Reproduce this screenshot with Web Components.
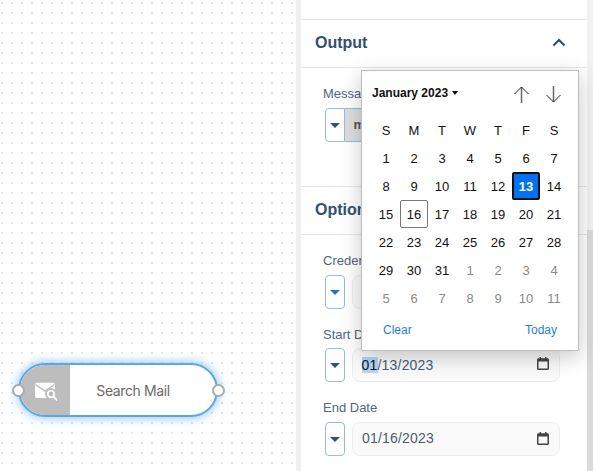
<!DOCTYPE html>
<html>
<head>
<meta charset="utf-8">
<style>
    html, body { margin: 0; height: 100%; overflow: hidden; }
    body { display: flex; width: 593px; height: 471px; font-family: "Liberation Sans", Arial, sans-serif; background: #fff; }
</style>
</head>
<body>
<flow-canvas>
    <flow-node label="Search Mail"></flow-node>
</flow-canvas>
<side-panel>
    <panel-section></panel-section>
    <panel-section title="Output" collapsible style="--body-h: 118px">
        <form-field label="Message" toggle="open"><tag-chip>message</tag-chip></form-field>
    </panel-section>
    <panel-section title="Options">
        <form-field label="Credentials" toggle="blue"><blank-input></blank-input></form-field>
        <form-field label="Start Date"><date-input value="01/13/2023" selected></date-input></form-field>
        <form-field label="End Date"><date-input value="01/16/2023"></date-input></form-field>
    </panel-section>
    <date-picker></date-picker>
</side-panel>

<script>
class FlowCanvas extends HTMLElement {
    constructor(){
        super();
        this.attachShadow({mode:"open"}).innerHTML = `
        <style>
            :host {
                display: block; position: relative; flex: none; width: 296px; height: 100%;
                background-color: #fff;
                background-image: conic-gradient(at 2px 2px, transparent 270deg, #e6e6e6 0);
                background-size: 10px 10px;
                background-position: 1px 2px;
            }
        </style>
        <slot></slot>`;
    }
}
customElements.define("flow-canvas", FlowCanvas);

class FlowNode extends HTMLElement {
    constructor(){
        super();
        this.attachShadow({mode:"open"}).innerHTML = `
        <style>
            :host {
                position: absolute; left: 18px; top: 363px; width: 200px; height: 54px;
                box-sizing: border-box; display: flex;
                background: #fff; border: 2px solid #5aa7e8; border-radius: 27px;
                box-shadow: 0 0 8px 2px rgba(90,167,232,.55);
                font: 14px Inter, "Liberation Sans", sans-serif; color: #6a6a6a;
            }
            #icon { flex: none; width: 50px; display: flex; align-items: center; justify-content: center;
                background: #bdbdbd; border-radius: 25px 0 0 25px; }
            #label { flex: 1; display: flex; align-items: center; justify-content: center; letter-spacing: -.4px; padding-right: 20px; }
            .port { position: absolute; top: 19px; width: 13px; height: 13px; box-sizing: border-box; border-radius: 50%;
                background: #fff; border: 2px solid #ababab; }
            .l { left: -8.500px; } .r { right: -9px; }
        </style>
        <div id="icon">
            <svg width="24" height="24" viewBox="0 0 24 24">
                <rect x="2" y="4.700" width="20" height="15.300" rx="2" fill="#fff"/>
                <path d="M2.500 6.500L12 13l9.500-6.500" fill="none" stroke="#bdbdbd" stroke-width="1.500"/>
                <circle cx="18" cy="16" r="6" fill="#bdbdbd"/>
                <circle cx="18" cy="16" r="3.200" fill="none" stroke="#fff" stroke-width="1.600"/>
                <path d="M20.500 18.500L24 22" stroke="#fff" stroke-width="1.800" stroke-linecap="round"/>
            </svg>
        </div>
        <div id="label"></div>
        <div class="port l"></div><div class="port r"></div>`;
    }
    connectedCallback(){
        this.shadowRoot.querySelector("#label").textContent = this.getAttribute("label");
    }
}
customElements.define("flow-node", FlowNode);

class SidePanel extends HTMLElement {
    constructor(){
        super();
        this.attachShadow({mode:"open"}).innerHTML = `
        <style>
            :host {
                display: flex; flex-direction: column; position: relative; flex: 1; height: 100%;
                box-sizing: border-box; border-left: 5px solid #efefef; overflow: hidden;
            }
            #track { position: absolute; right: 0; top: 0; bottom: 0; width: 6px; background: #f1f1f1; }
            #thumb { position: absolute; right: 0; top: 230px; bottom: 0; width: 6px; background: #dcd9d9; }
        </style>
        <slot></slot>
        <div id="track"></div><div id="thumb"></div>`;
    }
}
customElements.define("side-panel", SidePanel);

class PanelSection extends HTMLElement {
    constructor(){
        super();
        this.attachShadow({mode:"open"}).innerHTML = `
        <style>
            :host { display: block; flex: none; width: 286px; box-sizing: border-box; border-bottom: 1px solid #e6e6e6; }
            :host(:not([title])) { height: 20px; }
            :host(:not([title])) header, :host(:not([title])) #body { display: none; }
            header {
                display: flex; align-items: center; justify-content: space-between; box-sizing: border-box;
                height: 48px; padding: 0 21px 2px 14px; border-bottom: 1px solid #e6e6e6;
                font-weight: bold; font-size: 16px; color: #34506f;
            }
            svg { display: none; }
            :host([collapsible]) svg { display: block; }
            #body { height: var(--body-h, auto); box-sizing: border-box; padding: 16px 27px 0 22px; }
        </style>
        <header><span id="title"></span>
            <svg width="14" height="9" viewBox="0 0 14 9"><path d="M1.500 7.500L7 2l5.500 5.500" fill="none" stroke="#34506f" stroke-width="2.200"/></svg>
        </header>
        <div id="body"><slot></slot></div>`;
    }
    connectedCallback(){
        this.shadowRoot.querySelector("#title").textContent = this.getAttribute("title");
    }
}
customElements.define("panel-section", PanelSection);

class FormField extends HTMLElement {
    constructor(){
        super();
        this.attachShadow({mode:"open"}).innerHTML = `
        <style>
            :host { display: block; height: 73.500px; font-size: 13px; color: #56637a; }
            #label { height: 20px; line-height: 20px; margin-bottom: 3.500px; }
            #row { display: flex; height: 34px; }
            #toggle {
                flex: none; width: 20px; height: 34px; margin-left: 1.500px; margin-right: 7.500px; box-sizing: border-box;
                border: 1px solid #8fbce8; border-radius: 4px; background: #fff;
                display: flex; align-items: center; justify-content: center;
            }
            #arrow { width: 0; height: 0; margin-top: 1px; border: 5px solid transparent; border-top: 5px solid #34506f; border-bottom: 0; }
            :host([toggle="blue"]) #arrow { border-top-color: #2474c8; }
            :host([toggle="open"]) #toggle { margin-right: 0; border-radius: 4px 0 0 4px; }
            ::slotted(*) { flex: 1; }
        </style>
        <div id="label"></div>
        <div id="row"><div id="toggle"><div id="arrow"></div></div><slot></slot></div>`;
    }
    connectedCallback(){
        this.shadowRoot.querySelector("#label").textContent = this.getAttribute("label");
    }
}
customElements.define("form-field", FormField);

class TagChip extends HTMLElement {
    constructor(){
        super();
        this.attachShadow({mode:"open"}).innerHTML = `
        <style>
            :host { display: flex; align-items: center; padding-left: 9px; box-sizing: border-box; background: #dedede;
                border: 1px solid #8fbce8; border-left: 0; border-radius: 0 4px 4px 0; font-size: 13px; font-weight: bold; color: #555; }
        </style>
        <slot></slot>`;
    }
}
customElements.define("tag-chip", TagChip);

class BlankInput extends HTMLElement {
    constructor(){
        super();
        this.attachShadow({mode:"open"}).innerHTML = `
        <style>
            :host { display: block; box-sizing: border-box; background: #fafafa; border: 1px solid #ececec; border-radius: 8px; }
        </style>`;
    }
}
customElements.define("blank-input", BlankInput);

class DateInput extends HTMLElement {
    constructor(){
        super();
        this.attachShadow({mode:"open"}).innerHTML = `
        <style>
            :host { display: flex; align-items: center; justify-content: space-between; box-sizing: border-box; padding: 0 10px 0 9px;
                background: #fafafa; border: 1px solid #ececec; border-radius: 8px; font-size: 14px; letter-spacing: .2px; color: #4c5a73; }
            #value { margin-top: -1px; }
            mark { display: inline-block; background: #b3d4fb; color: #111; padding: 0 1px 0 0; margin-right: -1px; margin-left: -.5px; }
            svg { display: block; }
            :host([selected]) svg { margin-top: -3px; }
        </style>
        <span id="value"></span>
        <svg width="12" height="13" viewBox="0 0 12 13">
            <path d="M2.500 0H4v1.300h4V0h1.500v1.300H10.500c.8 0 1.500.7 1.500 1.500V11.500c0 .8-.7 1.500-1.500 1.500h-9C.7 13 0 12.300 0 11.500V2.800C0 2 .7 1.300 1.500 1.300h1zM1.500 4.500v7h9v-7z" fill="#444"/>
        </svg>`;
    }
    connectedCallback(){
        const v = this.getAttribute("value");
        const el = this.shadowRoot.querySelector("#value");
        if(this.hasAttribute("selected")){
            el.innerHTML = "<mark>" + v.slice(0,2) + "</mark>" + v.slice(2);
        } else {
            el.textContent = v;
        }
    }
}
customElements.define("date-input", DateInput);

class DatePicker extends HTMLElement {
    constructor(){
        super();
        const heads = ["S","M","T","W","T","F","S"].map(d => `<div class="c head">${d}</div>`).join("");
        let days = "";
        for(let i = 1; i <= 31; i++){
            const cls = i == 13 ? " sel" : i == 16 ? " today" : "";
            days += `<div class="c${cls}">${i}</div>`;
        }
        for(let i = 1; i <= 11; i++) days += `<div class="c out">${i}</div>`;
        this.attachShadow({mode:"open"}).innerHTML = `
        <style>
            :host {
                position: absolute; left: 60px; top: 70px; width: 218px; height: 281px; box-sizing: border-box;
                background: #fff; border: 1px solid #bdbdbd; z-index: 5;
                box-shadow: 0 6px 20px rgba(0,0,0,.22);
                display: flex; flex-direction: column; padding: 0 10px; color: #111; font-size: 13px;
            }
            #top { display: flex; align-items: center; height: 44px; font-weight: bold; font-size: 12px; }
            #month { flex: 1; display: flex; align-items: center; gap: 4px; }
            #caret { width: 0; height: 0; border: 3.500px solid transparent; border-top: 4px solid #111; border-bottom: 0; }
            #nav { display: flex; gap: 17px; margin-right: 7px; margin-top: 3px; }
            #grid { display: grid; grid-template-columns: repeat(7, 28px); grid-auto-rows: 28px; margin-top: 1px; }
            .c { display: flex; align-items: center; justify-content: center; box-sizing: border-box; }
            .out { color: #8a8a8a; }
            .sel { background: #0071f2; color: #fff; font-weight: bold; border: 2px solid #111; border-radius: 2px; }
            .today { border: 1px solid #777; border-radius: 2px; }
            #foot { display: flex; justify-content: space-between; padding: 0 11px; margin-top: 11px; color: #1f7fd8; font-size: 12px; }
        </style>
        <div id="top">
            <div id="month">January 2023 <div id="caret"></div></div>
            <div id="nav">
                <svg width="15" height="17" viewBox="0 0 15 17"><path d="M7.500 17V1" stroke="#666" stroke-width="1.500"/><path d="M.5 8l7-7 7 7" fill="none" stroke="#222" stroke-width="1"/></svg>
                <svg width="15" height="17" viewBox="0 0 15 17"><path d="M7.500 0v16" stroke="#666" stroke-width="1.500"/><path d="M.5 9l7 7 7-7" fill="none" stroke="#222" stroke-width="1"/></svg>
            </div>
        </div>
        <div id="grid">${heads}${days}</div>
        <div id="foot"><span>Clear</span><span>Today</span></div>`;
    }
}
customElements.define("date-picker", DatePicker);
</script>
</body>
</html>
